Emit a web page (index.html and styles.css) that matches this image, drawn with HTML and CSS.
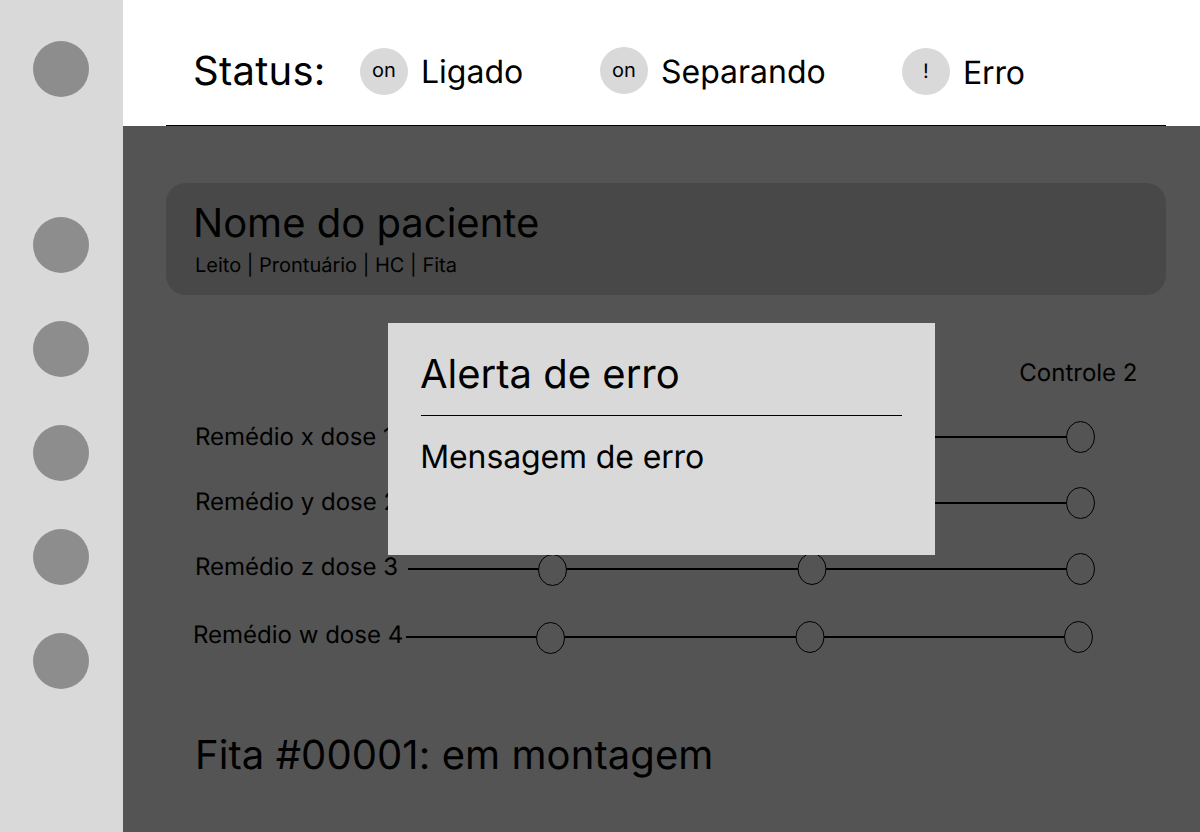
FILE: index.html
```html
<!DOCTYPE html>
<html lang="pt-BR">
<head>
<meta charset="utf-8">
<title>Status</title>
<link rel="stylesheet" href="styles.css">
</head>
<body>
<div class="app">
  <nav class="sidebar">
    <span class="dot dot-first"></span>
    <span class="dot"></span>
    <span class="dot"></span>
    <span class="dot"></span>
    <span class="dot"></span>
    <span class="dot"></span>
  </nav>
  <div class="page">
    <header class="status">
      <h1 class="title status-title">Status:</h1>
      <div class="item item-on"><span class="badge">on</span><span class="label">Ligado</span></div>
      <div class="item item-sep"><span class="badge">on</span><span class="label">Separando</span></div>
      <div class="item item-err"><span class="badge">!</span><span class="label">Erro</span></div>
    </header>
    <main class="content">
      <section class="patient">
        <h2 class="title patient-name">Nome do paciente</h2>
        <p class="patient-info">Leito | Prontuário | HC | Fita</p>
      </section>
      <section class="doses">
        <div class="columns">Controle 2</div>
        <div class="row"><span class="dose">Remédio x dose 1</span><svg class="track" width="690" height="34"><path d="M0 17H130.5M158.5 17H390M418 17H658.5"/><ellipse cx="144.5" cy="17" rx="14" ry="15.5"/><ellipse cx="404" cy="17" rx="14" ry="15.5"/><ellipse cx="672.5" cy="17" rx="14" ry="15.5"/></svg></div>
        <div class="row"><span class="dose dose-y">Remédio y dose 2</span><svg class="track" width="690" height="34"><path d="M0 17H130.5M158.5 17H390M418 17H658.5"/><ellipse cx="144.5" cy="17" rx="14" ry="15.5"/><ellipse cx="404" cy="17" rx="14" ry="15.5"/><ellipse cx="672.5" cy="17" rx="14" ry="15.5"/></svg></div>
        <div class="row"><span class="dose dose-z">Remédio z dose 3</span><svg class="track" width="690" height="34"><path d="M0 17H130.5M158.5 17H390M418 17H658.5"/><ellipse cx="144.5" cy="18" rx="14" ry="15.5"/><ellipse cx="404" cy="17" rx="14" ry="15.5"/><ellipse cx="672.5" cy="17" rx="14" ry="15.5"/></svg></div>
        <div class="row row-last"><span class="dose dose-z">Remédio w dose 4</span><svg class="track" width="690" height="34"><path d="M0 17H130.5M158.5 17H390M418 17H658.5"/><ellipse cx="144.5" cy="18" rx="14" ry="15.5"/><ellipse cx="404" cy="17" rx="14" ry="15.5"/><ellipse cx="672.5" cy="17" rx="14" ry="15.5"/></svg></div>
      </section>
      <h2 class="title tape">Fita #00001: em montagem</h2>
    </main>
  </div>
  <div class="dialog" role="alertdialog">
    <h2 class="title dialog-title">Alerta de erro</h2>
    <p class="label dialog-message">Mensagem de erro</p>
  </div>
</div>
</body>
</html>
```

FILE: styles.css
```css
* { box-sizing: border-box; margin: 0; padding: 0; }
body { font-family: Inter, "Liberation Sans", sans-serif; color: #000; text-rendering: geometricPrecision; background: #fff; }
.app { position: relative; display: flex; width: 1200px; height: 832px; overflow: hidden; }
.sidebar { width: 123px; background: #d9d9d9; padding: 41px 0 0 33px; display: flex; flex-direction: column; gap: 48px; }
.dot { width: 56px; height: 56px; border-radius: 50%; background: #8d8d8d; flex: none; }
.dot-first { margin-bottom: 72px; }
.page { flex: 1; display: flex; flex-direction: column; }
.title { font-size: 40px; line-height: 48px; font-weight: 400; white-space: nowrap; }
.label { font-size: 32px; line-height: 39px; white-space: nowrap; }
.status { height: 126px; margin-left: 43px; width: 1000px; padding: 47px 0 0 27px; border-bottom: 1px solid #000; display: flex; align-items: flex-start; }
.status-title { width: 167px; letter-spacing: 0.25px; }
.item { display: flex; gap: 13px; }
.item .label { padding-top: 4px; }
.item-on { width: 240px; padding-top: 1px; }
.item-sep { width: 302px; }
.item-err { padding-top: 1px; }
.item-sep .label, .item-err .label { padding-top: 5px; }
.item-err .label { letter-spacing: -0.2px; }
.badge { width: 48px; height: 47px; border-radius: 50%; background: #d9d9d9; font-size: 20px; line-height: 46px; text-align: center; }
.item-on .badge { line-height: 44px; }
.content { flex: 1; background: #545454; padding: 57px 34px 0 43px; }
.patient { height: 112px; border-radius: 20px; background: #484848; padding: 16px 27px; }
.patient-info { font-size: 20px; line-height: 24px; padding: 6px 0 0 2px; }
.doses { padding: 63px 0 0 29px; }
.columns { font-size: 24px; line-height: 29px; text-align: right; padding-right: 28.5px; margin-bottom: 33px; }
.row { display: flex; height: 66px; }
.dose { width: 213px; font-size: 24px; line-height: 29px; white-space: nowrap; padding-top: 2px; }
.dose-y { padding-top: 1px; }
.dose-z { padding-top: 0; }
.track { flex: none; fill: none; stroke: #000; }
.track path { stroke-width: 2; }
.row-last { margin: 2px 0 0 -2px; }
.tape { padding: 45px 0 0 29px; letter-spacing: 0.08px; }
.dialog { position: absolute; left: 388px; top: 323px; width: 547px; height: 232px; background: #d9d9d9; padding: 27px 33px; }
.dialog-title { height: 66px; border-bottom: 1px solid #000; text-indent: -1px; }
.dialog-message { padding-top: 21px; text-indent: -0.7px; letter-spacing: -0.13px; }
```
